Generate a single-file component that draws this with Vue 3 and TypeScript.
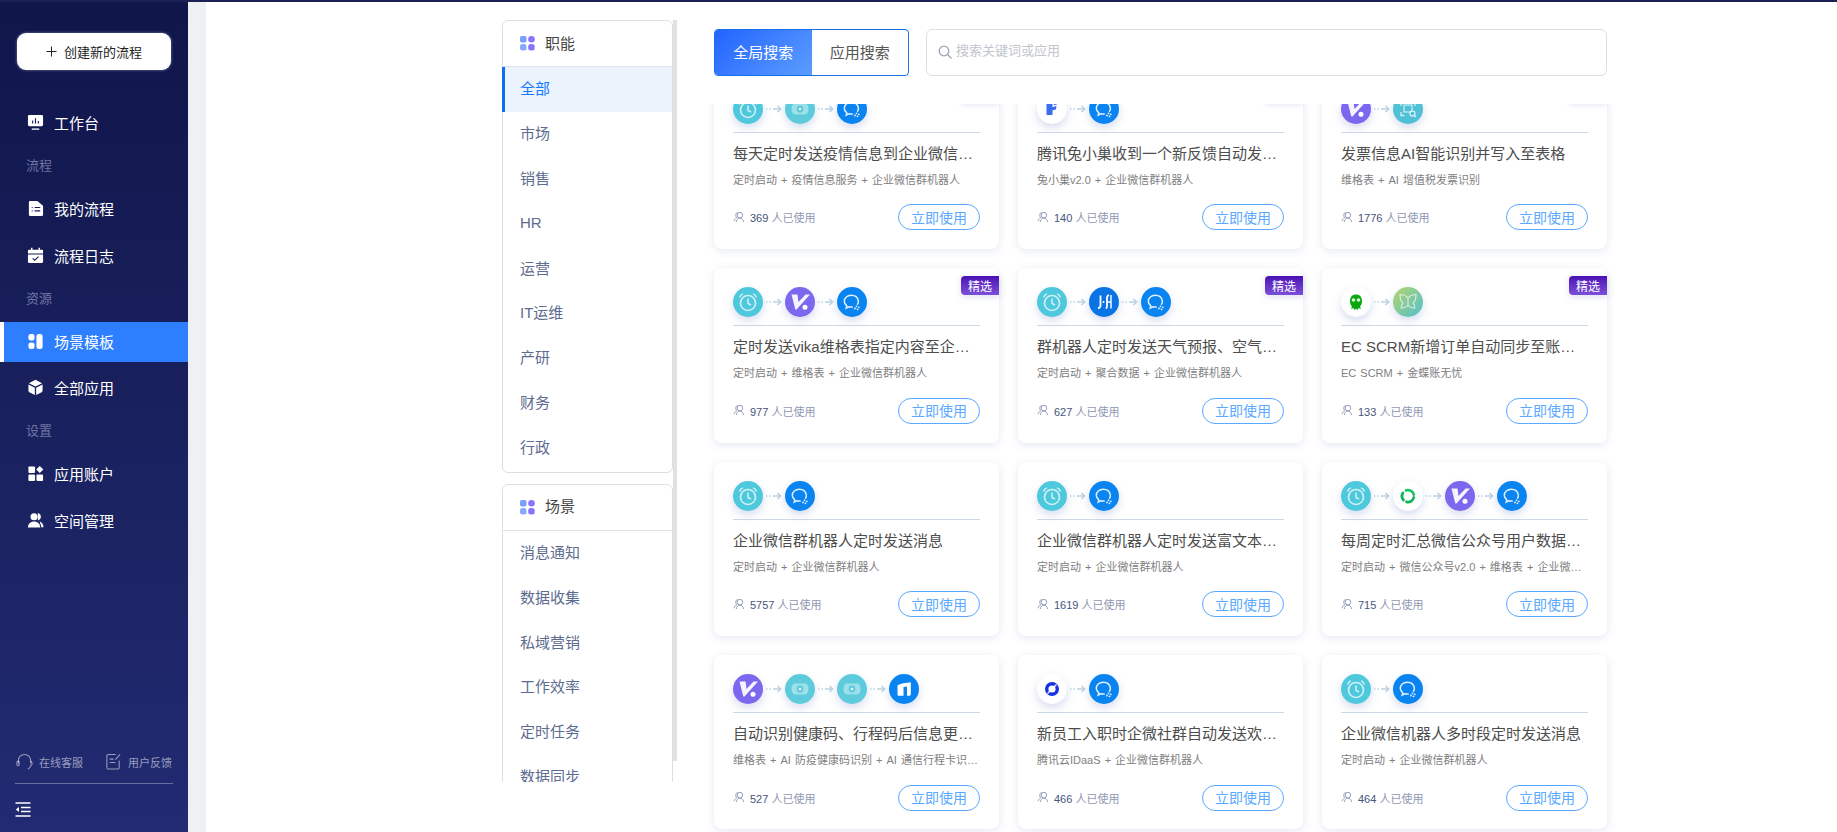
<template>
  <div class="page">
    <!-- shared icons -->
    <svg class="defs" aria-hidden="true">
      <defs>
        <linearGradient id="butterfly-bg" x1="0" y1="0" x2="1" y2="1">
          <stop offset="0" stop-color="#b5d46a" />
          <stop offset="1" stop-color="#52bfcf" />
        </linearGradient>
      </defs>
      <!-- nav -->
      <symbol id="n-desk" viewBox="0 0 18 18">
        <path d="M2.500 1h13A1.500 1.500 0 0 1 17 2.500v9a1.500 1.500 0 0 1-1.500 1.500h-13A1.500 1.500 0 0 1 1 11.500v-9A1.500 1.500 0 0 1 2.500 1z" fill="#fff" />
        <path d="M6 7v3M9 4.500V10M12 7.500V10" stroke="#1a1f5c" stroke-width="1.200" fill="none" />
        <path d="M5 16h8" stroke="#fff" stroke-width="1.400" />
      </symbol>
      <symbol id="n-doc" viewBox="0 0 18 18">
        <path d="M3 1h8l6 5v9.500A1.500 1.500 0 0 1 15.500 17h-12A1.500 1.500 0 0 1 2 15.500v-13.500A1 1 0 0 1 3 1z" fill="#fff" />
        <path d="M5 8h1M8 8h6M5 11.500h1M8 11.500h6" stroke="#1a1f5c" stroke-width="1.200" />
      </symbol>
      <symbol id="n-log" viewBox="0 0 18 18">
        <path d="M2 3h14a1 1 0 0 1 1 1v3H1V4a1 1 0 0 1 1-1z" fill="#fff" />
        <path d="M5 .8v3M13 .8v3" stroke="#fff" stroke-width="1.600" />
        <path d="M1 8h16v7.500a1.500 1.500 0 0 1-1.500 1.500h-13A1.500 1.500 0 0 1 1 15.500z" fill="#fff" />
        <path d="M6 12l2.200 2 4-3.800" stroke="#1a1f5c" stroke-width="1.200" fill="none" />
      </symbol>
      <symbol id="n-tpl" viewBox="0 0 18 18">
        <rect x="1.500" y="1" width="6.500" height="7" rx="2.500" fill="#fff" />
        <rect x="1.500" y="10" width="6.500" height="7" rx="2.500" fill="#fff" />
        <rect x="10" y="1" width="6.500" height="16" rx="2.500" fill="#fff" />
      </symbol>
      <symbol id="n-cube" viewBox="0 0 18 18">
        <path d="M9 .8l7 3.600L9 8 2 4.400z" fill="#fff" />
        <path d="M1.500 5.800L8.300 9.300V17l-5.800-3a2 2 0 0 1-1-1.700zM16.500 5.800L9.700 9.300V17l5.800-3a2 2 0 0 0 1-1.700z" fill="#fff" />
      </symbol>
      <symbol id="n-apps" viewBox="0 0 18 18">
        <rect x="1.500" y="1.500" width="7" height="7" rx="1" fill="#fff" />
        <rect x="1.500" y="10" width="7" height="7" rx="1" fill="#fff" />
        <rect x="10" y="10" width="7" height="7" rx="1" fill="#fff" />
        <path d="M13.500 1l3.800 3.800-3.800 3.800-3.800-3.800z" fill="#fff" />
      </symbol>
      <symbol id="n-user" viewBox="0 0 18 18">
        <circle cx="7.500" cy="5" r="3.800" fill="#fff" />
        <path d="M1 16.500c0-4 2.600-6.500 6.500-6.500s6.500 2.500 6.500 6.500z" fill="#fff" />
        <path d="M11.500 1.300a3.800 3.800 0 0 1 0 7.400M13.500 10.300c2.200.8 3.600 2.900 3.600 5.700h-1.800" fill="#fff" stroke="#fff" stroke-width=".6" />
      </symbol>
      <!-- apps -->
      <symbol id="a-clock" viewBox="0 0 30 30">
        <circle cx="15" cy="16" r="7.500" fill="none" stroke="#fff" stroke-opacity=".75" stroke-width="1.600" />
        <path d="M15 11.500V16.500l3 1.500" fill="none" stroke="#fff" stroke-opacity=".75" stroke-width="1.500" />
        <path d="M6.500 10.500A5 5 0 0 1 10 6.800M23.500 10.500A5 5 0 0 0 20 6.800" fill="none" stroke="#fff" stroke-opacity=".75" stroke-width="1.400" />
      </symbol>
      <symbol id="a-wecom" viewBox="0 0 30 30">
        <path d="M20.200 17.800c1-1.100 1.400-2.600 1.100-4.100-.6-3.200-3.300-5.400-7-5.400-4 0-7 2.600-7 5.900 0 1.900 1 3.500 2.500 4.600l-.6 2.300 2.700-1.300c1.300.4 2.700.4 3.900.1" fill="none" stroke="#fff" stroke-opacity=".88" stroke-width="1.500" />
        <circle cx="19.500" cy="19.300" r=".9" fill="#fff" fill-opacity=".9" />
        <circle cx="21.800" cy="20.300" r=".9" fill="#fff" fill-opacity=".9" />
        <circle cx="20.500" cy="22.300" r=".9" fill="#fff" fill-opacity=".9" />
        <circle cx="18" cy="21.500" r=".9" fill="#fff" fill-opacity=".9" />
      </symbol>
      <symbol id="a-vika" viewBox="0 0 30 30">
        <path d="M6.500 7.500h6l1 7.500 7-7.500h4.500L11.500 22.500h-1.200z" fill="#fff" fill-opacity=".92" />
        <circle cx="20" cy="20.300" r="2.500" fill="#fff" />
      </symbol>
      <symbol id="a-health" viewBox="0 0 30 30">
        <path d="M10.500 9.500h9c2.500 0 4 2.500 4 5.500s-1.500 5.500-4 5.500h-9c-2.500 0-4-2.500-4-5.500s1.500-5.500 4-5.500z" fill="#fff" fill-opacity=".4" />
        <circle cx="15" cy="15" r="3.400" fill="#5ecbdd" />
        <circle cx="15" cy="15" r="1.300" fill="#fff" fill-opacity=".85" />
      </symbol>
      <symbol id="a-tux" viewBox="0 0 30 30">
        <path d="M9.500 9l6-1.500V13l4-1-.5 3.500-3.500 .8V21h-6z" fill="#3a6df0" />
        <path d="M16.800 8.500l3.500-1-.5 3-3 .8z" fill="#3a6df0" />
      </symbol>
      <symbol id="a-scan" viewBox="0 0 30 30">
        <path d="M8 12V8.500h3.500M18.500 8.500H22V12M8 18v3.500h3.500" fill="none" stroke="#fff" stroke-opacity=".75" stroke-width="1.300" />
        <rect x="11" y="11" width="8" height="7" fill="none" stroke="#fff" stroke-opacity=".75" stroke-width="1.200" />
        <circle cx="19.500" cy="19.500" r="2.500" fill="#4fc0d6" stroke="#fff" stroke-opacity=".85" stroke-width="1.200" />
        <path d="M21.300 21.300l1.700 1.700" stroke="#fff" stroke-opacity=".85" stroke-width="1.200" />
      </symbol>
      <symbol id="a-juhe" viewBox="0 0 30 30">
        <path d="M11.500 8.500v9.500c0 2-.8 3-2.500 3.200" fill="none" stroke="#fff" stroke-width="1.800" />
        <circle cx="14.500" cy="15" r="1" fill="#fff" />
        <path d="M20 8c-1.400.4-2 1.400-2 3.200v8.300c0 1-.4 1.700-1.300 2" fill="none" stroke="#fff" stroke-width="1.800" />
        <path d="M22 8v13.500M18 15h4" fill="none" stroke="#fff" stroke-width="1.400" />
      </symbol>
      <symbol id="a-ec" viewBox="0 0 30 30">
        <path d="M15 7.500c3.800 0 6 2.700 6 6.500 0 2.700-.7 4.400-2 5.500l1 2.500-2.500-1-.7 2-1.800-1.200-1.800 1.200-.7-2-2.500 1 1-2.500c-1.300-1.100-2-2.800-2-5.500 0-3.800 2.200-6.500 6-6.500z" fill="#0aa80f" />
        <circle cx="12.500" cy="13" r="1.800" fill="#d8f5d8" />
        <circle cx="17.500" cy="13" r="1.800" fill="#d8f5d8" />
      </symbol>
      <symbol id="a-butterfly" viewBox="0 0 30 30">
        <circle cx="15" cy="15" r="15" fill="url(#butterfly-bg)" />
        <path d="M15 11c-2-2.500-5-3.500-8-3.500 0 4 .8 7 3 8.500-1 1-2 3-1.800 5 2.800 0 5.300-1 6.800-3 1.500 2 4 3 6.800 3 .2-2-.8-4-1.800-5 2.200-1.500 3-4.500 3-8.500-3 0-6 1-8 3.500zM15 11v7" fill="none" stroke="#fff" stroke-opacity=".7" stroke-width="1.100" />
      </symbol>
      <symbol id="a-wxmp" viewBox="0 0 30 30">
        <g fill="none" stroke-width="2.800" stroke-linecap="round">
          <path d="M13 9.400a6 6 0 0 1 7.800 4.200" stroke="#22c36b" />
          <path d="M20.800 16.500a6 6 0 0 1-7.300 4.400" stroke="#0fb45c" />
          <path d="M10.500 19a6 6 0 0 1-.6-7" stroke="#0fb45c" />
        </g>
      </symbol>
      <symbol id="a-idaas" viewBox="0 0 30 30">
        <circle cx="15" cy="15" r="5.300" fill="none" stroke="#1233e6" stroke-width="3.400" />
        <path d="M10.500 19.500l9-9" stroke="#fff" stroke-width="1.200" />
      </symbol>
      <symbol id="a-tongxin" viewBox="0 0 30 30">
        <path d="M8.500 11.500C11 9.500 17 8.500 21.800 8.500V20c0 1-.6 1.800-1.800 1.800h-2V12.500l-3.500 .5v8.800H9.800c-.8 0-1.300-.6-1.300-1.400zM12 16h2.500" fill="#fff" />
      </symbol>
    </svg>

    <div class="topline"></div>

    <div class="layout">
      <!-- 사이드바 -->
      <aside class="sidebar">
        <button class="create-btn">
          <svg class="plus" viewBox="0 0 12 12"><path d="M6 .5v11M.5 6h11" stroke="#222" stroke-width="1.100" /></svg>
          创建新的流程
        </button>

        <nav class="nav">
          <template v-for="item in navItems" :key="item.text">
            <div v-if="!item.icon" class="nav-label">{{ item.text }}</div>
            <a v-else :class="['nav-item', { active: item.active }]">
              <svg class="nav-icon"><use :href="'#n-' + item.icon" /></svg>
              {{ item.text }}
            </a>
          </template>
        </nav>

        <div class="side-foot">
          <div class="foot-links">
            <span class="foot-link">
              <svg class="foot-icon" viewBox="0 0 18 18" fill="none" stroke="currentColor" stroke-width="1.100">
                <path d="M2.500 11V8a6.500 6.500 0 0 1 13 0v3" />
                <rect x="1" y="8.500" width="2.400" height="5" rx="1.200" />
                <path d="M15.500 8.500c1 .7 1.500 1.500 1.500 2.500s-.5 2-1.500 2.500c-.3 1.800-1.500 3-3 3.500" />
              </svg>
              在线客服
            </span>
            <span class="foot-link">
              <svg class="foot-icon" viewBox="0 0 18 18" fill="none" stroke="currentColor" stroke-width="1.100">
                <path d="M11.500 1.500H3.500a1.500 1.500 0 0 0-1.500 1.500v12.500a1.500 1.500 0 0 0 1.500 1.500h10a1.500 1.500 0 0 0 1.500-1.500V8" />
                <path d="M5 6.500h4M5 10h6M11 7l5-5.500" />
              </svg>
              用户反馈
            </span>
          </div>
          <svg class="collapse" viewBox="0 0 16 15" fill="none" stroke="#fff" stroke-width="1.300">
            <path d="M.5 1h15M6 5.500h9.500M6 9.500h9.500M.5 14h15" />
            <path d="M4 5v5L.8 7.500z" fill="#fff" stroke="none" />
          </svg>
        </div>
      </aside>

      <div class="strip"></div>

      <main class="content">
        <!-- 필터 -->
        <div class="filter-col">
          <div v-for="group in filterGroups" :key="group.title" class="filter-card">
            <div class="filter-head">
              <svg class="dots" viewBox="0 0 15 15">
                <rect x="0" y="0" width="6.500" height="6.500" rx="1.800" fill="#7b9dfb" />
                <circle cx="11.500" cy="3.300" r="3.300" fill="#8b74fb" />
                <rect x="0" y="8" width="6.500" height="6.500" rx="2.500" fill="#85a9fd" />
                <rect x="8.200" y="8" width="6.500" height="6.500" rx="2.500" fill="#8b74fb" />
              </svg>
              <span class="lift">{{ group.title }}</span>
            </div>
            <div v-for="opt in group.items" :key="opt" :class="['filter-item', { on: opt === '全部' }]">
              <span class="lift">{{ opt }}</span>
            </div>
          </div>
          <div class="thumb"></div>
        </div>

        <!-- 목록 -->
        <div class="list-col">
          <div class="toolbar">
            <div class="tabs">
              <span class="tab on">全局搜索</span>
              <span class="tab">应用搜索</span>
            </div>
            <div class="search">
              <svg class="search-icon" viewBox="0 0 14 14" fill="none" stroke="#99a2ba" stroke-width="1.300">
                <circle cx="6" cy="6" r="4.800" />
                <path d="M9.500 9.500l4 4" />
              </svg>
              <span class="placeholder">搜索关键词或应用</span>
            </div>
          </div>

          <div class="grid-clip">
            <div class="grid">
              <article v-for="card in cards" :key="card.title" class="card">
                <span v-if="card.featured" class="badge">精选</span>
                <div class="flow">
                  <template v-for="(app, i) in card.apps" :key="i">
                    <svg v-if="i > 0" class="arrow" viewBox="0 0 16 8" fill="none" stroke="#bcd2e2" stroke-width="1.500">
                      <path d="M0 4h1.500M3.500 4h1.500M7 4h7.500" />
                      <path d="M11.500 1l3.200 3-3.200 3" />
                    </svg>
                    <span class="app" :class="'bg-' + app">
                      <svg><use :href="'#a-' + app" /></svg>
                    </span>
                  </template>
                </div>
                <h3 class="title">{{ card.title }}</h3>
                <p class="desc">{{ card.desc }}</p>
                <div class="card-foot">
                  <span class="used">
                    <svg class="used-icon" viewBox="0 0 13 13" fill="none" stroke="#8a93b3" stroke-width="1">
                      <circle cx="7.500" cy="4.500" r="3" />
                      <path d="M3.500 12c.3-2.500 2-4.300 4-4.300s3.500 1.800 4 4.300M5 1.500C3.500 2 3 3.500 3 5c0 1 .3 1.800 1 2.300-1.500.8-2.500 2.300-2.800 3.700" />
                    </svg>
                    <span><b>{{ card.used }}</b> 人已使用</span>
                  </span>
                  <button class="use-btn">立即使用</button>
                </div>
              </article>
            </div>
          </div>
        </div>
      </main>
    </div>
  </div>
</template>

<script setup lang="ts">
type NavItem = { text: string; icon?: string; active?: boolean }
type Card = { title: string; desc: string; used: number; apps: string[]; featured?: boolean }

const navItems: NavItem[] = [
  { text: '工作台', icon: 'desk' },
  { text: '流程' },
  { text: '我的流程', icon: 'doc' },
  { text: '流程日志', icon: 'log' },
  { text: '资源' },
  { text: '场景模板', icon: 'tpl', active: true },
  { text: '全部应用', icon: 'cube' },
  { text: '设置' },
  { text: '应用账户', icon: 'apps' },
  { text: '空间管理', icon: 'user' },
]

const filterGroups = [
  { title: '职能', items: ['全部', '市场', '销售', 'HR', '运营', 'IT运维', '产研', '财务', '行政'] },
  { title: '场景', items: ['消息通知', '数据收集', '私域营销', '工作效率', '定时任务', '数据同步'] },
]

const cards: Card[] = [
  { title: '每天定时发送疫情信息到企业微信群机器人', desc: '定时启动 + 疫情信息服务 + 企业微信群机器人', used: 369, apps: ['clock', 'health', 'wecom'], featured: true },
  { title: '腾讯兔小巢收到一个新反馈自动发送消息通知', desc: '兔小巢v2.0 + 企业微信群机器人', used: 140, apps: ['tux', 'wecom'], featured: true },
  { title: '发票信息AI智能识别并写入至表格', desc: '维格表 + AI 增值税发票识别', used: 1776, apps: ['vika', 'scan'], featured: true },
  { title: '定时发送vika维格表指定内容至企业微信群', desc: '定时启动 + 维格表 + 企业微信群机器人', used: 977, apps: ['clock', 'vika', 'wecom'], featured: true },
  { title: '群机器人定时发送天气预报、空气质量信息', desc: '定时启动 + 聚合数据 + 企业微信群机器人', used: 627, apps: ['clock', 'juhe', 'wecom'], featured: true },
  { title: 'EC SCRM新增订单自动同步至账无忧', desc: 'EC SCRM + 金蝶账无忧', used: 133, apps: ['ec', 'butterfly'], featured: true },
  { title: '企业微信群机器人定时发送消息', desc: '定时启动 + 企业微信群机器人', used: 5757, apps: ['clock', 'wecom'] },
  { title: '企业微信群机器人定时发送富文本消息内容', desc: '定时启动 + 企业微信群机器人', used: 1619, apps: ['clock', 'wecom'] },
  { title: '每周定时汇总微信公众号用户数据到维格表', desc: '定时启动 + 微信公众号v2.0 + 维格表 + 企业微信群机器人', used: 715, apps: ['clock', 'wxmp', 'vika', 'wecom'] },
  { title: '自动识别健康码、行程码后信息更新到维格表', desc: '维格表 + AI 防疫健康码识别 + AI 通信行程卡识别 + 企业微信', used: 527, apps: ['vika', 'health', 'health', 'tongxin'] },
  { title: '新员工入职时企微社群自动发送欢迎消息通知', desc: '腾讯云IDaaS + 企业微信群机器人', used: 466, apps: ['idaas', 'wecom'] },
  { title: '企业微信机器人多时段定时发送消息', desc: '定时启动 + 企业微信群机器人', used: 464, apps: ['clock', 'wecom'] },
]
</script>

<style>
html, body { margin: 0; height: 100%; overflow: hidden; background: #fff; }
</style>

<style scoped>
/* 레이아웃 */
.page {
  height: 100vh; display: flex; flex-direction: column; overflow: hidden;
  font-family: "Liberation Sans", "Noto Sans CJK SC", sans-serif;
}
.defs { display: block; width: 0; height: 0; overflow: hidden; }
.topline { height: 2px; flex: none; background: #1c2156; }
.layout { flex: 1; min-height: 0; display: flex; }

/* 사이드바 */
.sidebar {
  width: 188px; flex: none; display: flex; flex-direction: column;
  background: linear-gradient(180deg, #10164a 0%, #222b72 100%);
}
.create-btn {
  margin: 31px 17px 0; height: 37px; display: flex; align-items: center; justify-content: center; gap: 7px;
  background: #fff; border: 0; border-radius: 9px; box-shadow: 0 0 3px rgba(170, 175, 215, .7); padding: 0 0 1px;
  font: 13px "Liberation Sans", "Noto Sans CJK SC", sans-serif; color: #222;
}
.plus { width: 11px; height: 11px; }
.nav { margin-top: 33px; display: flex; flex-direction: column; }
.nav-item {
  height: 40px; box-sizing: border-box; display: flex; align-items: center; gap: 10px; padding: 0 0 1px 27px;
  font-size: 15px; color: #fff;
}
.nav-item + .nav-item { margin-top: 6.500px; }
.nav-item.active { background: #2e7fff; border-left: 4px solid #fff; padding-left: 23px; }
.nav-icon { width: 17px; height: 17px; flex: none; }
.nav-label {
  height: 46px; box-sizing: border-box; display: flex; align-items: center; padding: 0 0 3px 26px;
  font-size: 13px; color: #6f75a3;
}
.side-foot { margin-top: auto; padding: 0 15px 15px; }
.foot-links {
  display: flex; justify-content: space-between; padding: 0 1px 13px;
  border-bottom: 1px solid rgba(255, 255, 255, .32);
}
.foot-link { display: flex; align-items: center; gap: 6px; font-size: 11px; color: rgba(255, 255, 255, .55); }
.foot-icon { width: 17px; height: 17px; }
.collapse { display: block; width: 16px; height: 15px; margin-top: 18px; }

.strip { width: 18px; flex: none; background: #eef0f4; }
.content { flex: 1; min-width: 0; display: flex; align-items: stretch; padding-left: 296px; }

/* 필터 */
.filter-col {
  position: relative; width: 175px; flex: none; margin-top: 18px; margin-bottom: 50px;
  padding-right: 4px; box-sizing: border-box; overflow: hidden;
}
.filter-card {
  border: 1px solid #dcdee2; border-radius: 6px; padding-bottom: 2px; margin-bottom: 10.500px; background: #fff;
}
.filter-head {
  height: 45px; display: flex; align-items: center; gap: 10px; padding-left: 17px;
  border-bottom: 1px solid #e0e2e6; font-size: 15px; color: #444;
}
.lift { margin-top: -3px; }
.dots { width: 15px; height: 15px; }
.filter-item {
  height: 44.800px; display: flex; align-items: center; padding-left: 17px;
  font-size: 15px; color: #5d6c90;
}
.filter-item.on { background: #ebf3fd; color: #1677ff; border-left: 3px solid #0f6ff0; margin-left: -1px; padding-left: 15px; }
.thumb { position: absolute; right: 0; top: 0; width: 4px; height: 741px; background: #e0e1e4; }

/* 목록 */
.list-col { width: 893px; flex: none; margin-left: 37px; display: flex; flex-direction: column; min-height: 0; }
.toolbar { flex: none; height: 75px; padding-top: 27px; box-sizing: border-box; display: flex; align-items: flex-start; gap: 17px; }
.tabs {
  width: 195px; height: 47px; flex: none; display: flex; box-sizing: border-box;
  border: 1px solid #1a6fe8; border-radius: 4px; overflow: hidden;
}
.tab { flex: 1; display: flex; align-items: center; justify-content: center; padding-bottom: 2px; font-size: 15px; color: #555; }
.tab.on { color: #fff; background: linear-gradient(135deg, #2264ff, #5c9dff); }
.search {
  width: 681px; height: 47px; box-sizing: border-box; display: flex; align-items: center; gap: 4px;
  border: 1px solid #dcdee2; border-radius: 6px; padding: 0 0 6px 11px;
}
.search-icon { width: 14px; height: 14px; margin-top: 5px; }
.placeholder { font-size: 13px; color: #c2c5cc; }
.grid-clip { flex: 1; min-height: 0; overflow: hidden; margin: 27px -12px 0; padding: 0 12px; }
.grid {
  margin-top: -29.200px; display: grid; grid-template-columns: repeat(3, 285px); column-gap: 19px;
  grid-auto-rows: 174.400px; row-gap: 19px;
}

/* 카드 */
.card {
  position: relative; box-sizing: border-box; display: flex; flex-direction: column; padding: 19px 19px 18.800px;
  background: #fff; border-radius: 8px; box-shadow: 0 2px 8px rgba(120, 140, 200, .2);
}
.badge {
  position: absolute; right: 0; top: 8px; width: 38px; height: 19px; display: flex; align-items: center; justify-content: center;
  border-radius: 4px 0 0 4px; background: linear-gradient(180deg, #4a12b5, #7c50d8);
  font-size: 12px; color: #fff; box-shadow: 0 2px 6px rgba(120, 140, 200, .25);
}
.flow { height: 38px; flex: none; display: flex; align-items: flex-start; border-bottom: 1px solid #cfd9e6; }
.app {
  width: 30px; height: 30px; flex: none; border-radius: 50%; background: #fff;
  box-shadow: 0 4px 9px rgba(90, 120, 190, .25);
}
.app svg { display: block; width: 30px; height: 30px; }
.bg-clock { background: #4dc8dc; }
.bg-wecom, .bg-tongxin { background: #0a84f0; }
.bg-juhe { background: #0b74e5; }
.bg-vika { background: #7b68ee; }
.bg-health { background: #5ecbdd; }
.bg-scan { background: #4fc0d6; }
.arrow { width: 16px; height: 8px; flex: none; margin: 11px 3px 0; }
.title {
  margin: 10px 0 0; height: 22px; line-height: 22px; font-size: 15px; font-weight: 400; color: #4d4d4d;
  white-space: nowrap; overflow: hidden; text-overflow: ellipsis;
}
.desc {
  margin: 6px 0 0; height: 18px; line-height: 18px; font-size: 11px; word-spacing: 1px; color: #808080;
  white-space: nowrap; overflow: hidden; text-overflow: ellipsis;
}
.card-foot { margin-top: auto; display: flex; align-items: center; justify-content: space-between; }
.used { display: flex; align-items: center; gap: 5px; font-size: 11px; color: #8f98b3; }
.used b { font-weight: 400; color: #47547c; }
.used-icon { width: 12px; height: 12px; margin-top: -1px; }
.use-btn {
  width: 82px; height: 26px; box-sizing: border-box; padding: 0 0 1px; background: #fff;
  border: 1px solid #5aa9ff; border-radius: 13px;
  font: 14px "Liberation Sans", "Noto Sans CJK SC", sans-serif; color: #5aa9ff;
}
</style>
